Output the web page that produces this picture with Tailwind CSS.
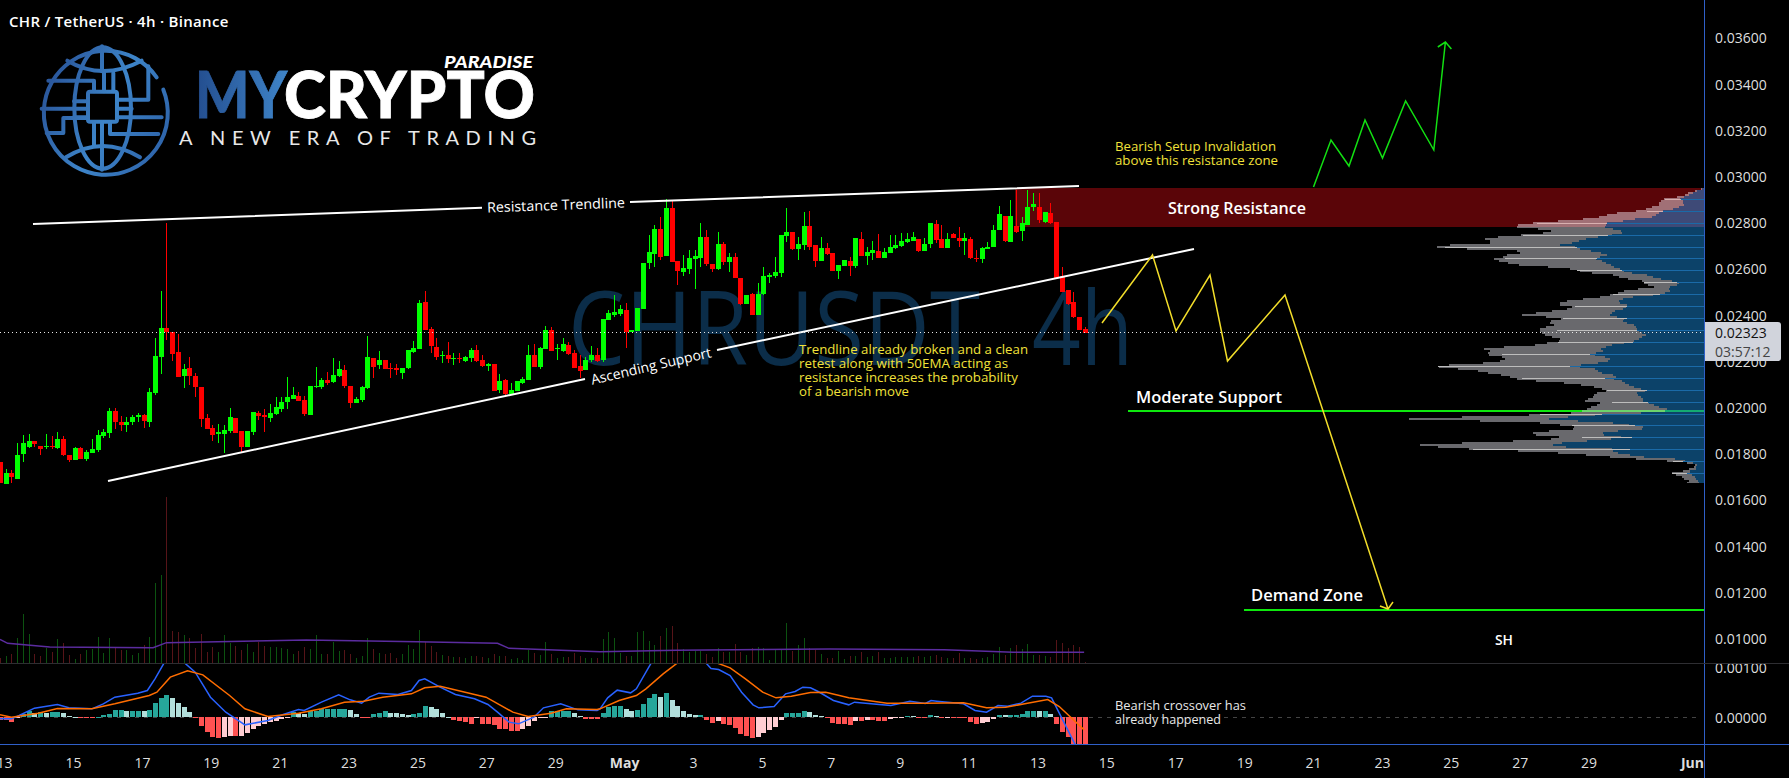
<!DOCTYPE html>
<html lang="en">
<head>
<meta charset="utf-8">
<title>CHR / TetherUS 4h</title>
<script src="https://cdn.jsdelivr.net/npm/@tailwindcss/browser@4"></script>
</head>
<body class="bg-black text-[#dedede] w-[1789px] h-[778px] overflow-hidden font-['Open_Sans',sans-serif]">
<div class="flex flex-col h-[778px]">
  <!-- price pane -->
  <div class="flex h-[663px] relative">
    <div class="w-[1704px] h-[663px] relative shrink-0">
      <svg id="main" width="1704" height="663" viewBox="0 0 1704 663" class="block">
        <defs>
          <linearGradient id="gl" gradientUnits="userSpaceOnUse" x1="20" x2="415" y1="120" y2="300"><stop offset="0" stop-color="#274f94"/><stop offset="0.55" stop-color="#3d84c8"/><stop offset="1" stop-color="#2e64aa"/></linearGradient>
          <linearGradient id="my" x1="0" x2="1" y1="0" y2="0"><stop offset="0" stop-color="#234d8e"/><stop offset="1" stop-color="#3f85c9"/></linearGradient>
        </defs>
        <text x="568" y="365" font-size="102" font-weight="500" fill="#0b2d49" textLength="412" lengthAdjust="spacingAndGlyphs">CHRUSDT</text>
        <text x="1032" y="365" font-size="102" font-weight="500" fill="#0b2d49" textLength="101" lengthAdjust="spacingAndGlyphs">4h</text>
        <rect x="1015" y="188" width="689" height="39" fill="#5a0508"/>
        <g id="profile"></g>
        <g id="vol"></g>
        <polyline id="ma" fill="none" stroke="#5b2c9f" stroke-width="1.5"></polyline>
        <g id="candles"></g>
        <!-- logo -->
        <g transform="translate(30 38) scale(0.3333)" fill="none" stroke="url(#gl)" stroke-width="12" stroke-linejoin="round" stroke-linecap="round">
          <path d="M380 118A186 186 0 1 0 400 155"/>
          <ellipse cx="218" cy="210" rx="85" ry="182"/>
          <path d="M216 25V100M216 322V395"/>
          <path d="M112 68Q218 130 335 68M108 358Q218 290 330 358"/>
          <rect x="174" y="161" width="87" height="90" rx="6"/>
          <path d="M222 105V160M250 105V160"/>
          <path d="M192 255V320M216 255V320"/>
          <path d="M55 128H192V160"/>
          <path d="M240 255V288H385"/>
          <path d="M262 185H355V85"/>
          <path d="M262 212H305M262 238H395"/>
          <path d="M35 212H172M132 190H172M132 238H172V238"/>
          <path d="M172 240H100V285H50"/>
        </g>
        <text x="195" y="118" font-size="64" font-weight="900" font-family="Lato" fill="url(#my)" stroke="url(#my)" stroke-width="0.8" textLength="92" lengthAdjust="spacingAndGlyphs">MY</text>
        <text x="284" y="118" font-size="64" font-weight="900" font-family="Lato" fill="#fff" stroke="#fff" stroke-width="0.8" textLength="251" lengthAdjust="spacingAndGlyphs">CRYPTO</text>
        <text x="444" y="68" font-size="17" font-weight="900" font-style="italic" font-family="Lato" fill="#fff" textLength="89" lengthAdjust="spacingAndGlyphs">PARADISE</text>
        <text x="179" y="145" font-size="20" font-weight="400" font-family="Lato" fill="#e8e8e8" textLength="357" lengthAdjust="spacing">A NEW ERA OF TRADING</text>
        <!-- trendlines -->
        <g stroke="#fff" stroke-width="2" fill="none">
          <path d="M33 224L482 207.7M630 202L1079 186"/>
          <path d="M108 481L585 379M717 350L1194 249"/>
        </g>
        <!-- levels -->
        <path d="M1128 411H1582" stroke="#0ee80e" stroke-width="2"/>
        <path d="M1582 411H1665" stroke="#6cd46c" stroke-width="2"/>
        <path d="M1665 411H1704" stroke="#14aa72" stroke-width="2"/>
        <path d="M1244 610H1704" stroke="#0ee80e" stroke-width="2"/>
        <!-- projections -->
        <g fill="none" stroke-linejoin="miter" stroke-width="1.5">
          <path stroke="#f2dd2a" d="M1102 323L1152.5 255L1176 331L1210 275L1227.5 361L1285 295L1388 609M1380 606L1388 609L1393 602"/>
          <path stroke="#12e012" d="M1313.5 187L1331 140L1349 166L1365 120L1382.5 158L1405.6 101L1433.8 150L1445.4 42M1437.8 47L1445.4 42L1451.4 49"/>
        </g>
        <path d="M0 332H1704" stroke="#e8e8e8" stroke-width="1" stroke-dasharray="1 3" shape-rendering="crispEdges"/>
        <!-- annotations -->
        <g fill="#f2e23a" font-size="13" font-weight="500">
          <text x="1115" y="151" textLength="161" lengthAdjust="spacingAndGlyphs">Bearish Setup Invalidation</text>
          <text x="1115" y="165" textLength="163" lengthAdjust="spacingAndGlyphs">above this resistance zone</text>
          <text x="799" y="354" textLength="229" lengthAdjust="spacingAndGlyphs">Trendline already broken and a clean</text>
          <text x="799" y="368" textLength="209" lengthAdjust="spacingAndGlyphs">retest along with 50EMA acting as</text>
          <text x="799" y="382" textLength="219" lengthAdjust="spacingAndGlyphs">resistance increases the probability</text>
          <text x="799" y="396" textLength="110" lengthAdjust="spacingAndGlyphs">of a bearish move</text>
        </g>
        <g fill="#fff" font-weight="500">
          <text x="556" y="210" font-size="14" text-anchor="middle" transform="rotate(-2 556 205)" textLength="138" lengthAdjust="spacingAndGlyphs">Resistance Trendline</text>
          <text x="651" y="371" font-size="14" text-anchor="middle" transform="rotate(-13 651 366)" textLength="123" lengthAdjust="spacingAndGlyphs">Ascending Support</text>
          <text x="1168" y="214" font-size="17" font-weight="600" textLength="138" lengthAdjust="spacingAndGlyphs">Strong Resistance</text>
          <text x="1136" y="403" font-size="17" font-weight="600" textLength="146" lengthAdjust="spacingAndGlyphs">Moderate Support</text>
          <text x="1251" y="601" font-size="17" font-weight="600" textLength="112" lengthAdjust="spacingAndGlyphs">Demand Zone</text>
          <text x="1495" y="645" font-size="14" font-weight="600" textLength="18" lengthAdjust="spacingAndGlyphs">SH</text>
        </g>
      </svg>
      <div class="absolute left-[9px] top-[11px] text-[15px] leading-[20px] font-semibold tracking-[0.3px] text-white">CHR / TetherUS · 4h · Binance</div>
    </div>
    <div class="w-[85px] h-[663px] border-l border-[#2f5fc8] pl-[10px] pt-[14.9px] text-[14px] relative">
      <div class="h-[46.2px] flex items-center">0.03600</div>
      <div class="h-[46.2px] flex items-center">0.03400</div>
      <div class="h-[46.2px] flex items-center">0.03200</div>
      <div class="h-[46.2px] flex items-center">0.03000</div>
      <div class="h-[46.2px] flex items-center">0.02800</div>
      <div class="h-[46.2px] flex items-center">0.02600</div>
      <div class="h-[46.2px] flex items-center">0.02400</div>
      <div class="h-[46.2px] flex items-center">0.02200</div>
      <div class="h-[46.2px] flex items-center">0.02000</div>
      <div class="h-[46.2px] flex items-center">0.01800</div>
      <div class="h-[46.2px] flex items-center">0.01600</div>
      <div class="h-[46.2px] flex items-center">0.01400</div>
      <div class="h-[46.2px] flex items-center">0.01200</div>
      <div class="h-[46.2px] flex items-center">0.01000</div>
      <div class="absolute left-0 top-[322px] w-[76px] h-[39px] bg-[#d1d4dc] rounded-r-[3px] pl-[10px] flex flex-col justify-center text-[14px] leading-[19px]">
        <div class="text-[#111]">0.02323</div>
        <div class="text-[#444]">03:57:12</div>
      </div>
    </div>
  </div>
  <!-- macd pane -->
  <div class="flex h-[80px] border-t border-[#2e2e32] box-content">
    <div class="w-[1704px] h-[80px] shrink-0">
      <svg id="macd" width="1704" height="80" viewBox="0 663.5 1704 80" class="block">
        <path d="M0 717H1700" stroke="#444" stroke-dasharray="4 5"/>
        <g id="hist"></g>
        <polyline id="mb" fill="none" stroke="#2962ff" stroke-width="1.5"></polyline>
        <polyline id="mo" fill="none" stroke="#ff6d00" stroke-width="1.5"></polyline>
        <g fill="#e8e8e8" font-size="13" font-weight="500">
          <text x="1115" y="709" textLength="131" lengthAdjust="spacingAndGlyphs">Bearish crossover has</text>
          <text x="1115" y="723" textLength="106" lengthAdjust="spacingAndGlyphs">already happened</text>
        </g>
      </svg>
    </div>
    <div class="flex-1 h-[80px] overflow-hidden border-l border-[#2f5fc8] pl-[10px] text-[14px]">
      <div class="h-[50px] flex items-center -mt-[22px]">0.00100</div>
      <div class="h-[50px] flex items-center">0.00000</div>
    </div>
  </div>
  <!-- time axis -->
  <div class="flex h-[34px] border-t border-[#2f5fc8]">
    <div class="w-[1704px] h-[34px] shrink-0 overflow-hidden flex items-center text-[14px] text-center">
      <div class="w-[68.9px] -ml-[29.85px] shrink-0">13</div>
      <div class="w-[68.9px] shrink-0">15</div>
      <div class="w-[68.9px] shrink-0">17</div>
      <div class="w-[68.9px] shrink-0">19</div>
      <div class="w-[68.9px] shrink-0">21</div>
      <div class="w-[68.9px] shrink-0">23</div>
      <div class="w-[68.9px] shrink-0">25</div>
      <div class="w-[68.9px] shrink-0">27</div>
      <div class="w-[68.9px] shrink-0">29</div>
      <div class="w-[68.9px] shrink-0 font-bold">May</div>
      <div class="w-[68.9px] shrink-0">3</div>
      <div class="w-[68.9px] shrink-0">5</div>
      <div class="w-[68.9px] shrink-0">7</div>
      <div class="w-[68.9px] shrink-0">9</div>
      <div class="w-[68.9px] shrink-0">11</div>
      <div class="w-[68.9px] shrink-0">13</div>
      <div class="w-[68.9px] shrink-0">15</div>
      <div class="w-[68.9px] shrink-0">17</div>
      <div class="w-[68.9px] shrink-0">19</div>
      <div class="w-[68.9px] shrink-0">21</div>
      <div class="w-[68.9px] shrink-0">23</div>
      <div class="w-[68.9px] shrink-0">25</div>
      <div class="w-[68.9px] shrink-0">27</div>
      <div class="w-[68.9px] shrink-0">29</div>
      <div class="w-[68.9px] ml-[34.5px] shrink-0 font-bold">Jun</div>
    </div>
    <div class="flex-1 border-l border-[#2f5fc8]"></div>
  </div>
</div>
<script>
const NS='http://www.w3.org/2000/svg';
function el(t,a,p){const e=document.createElementNS(NS,t);for(const k in a)e.setAttribute(k,a[k]);p.appendChild(e);return e}
const A=[[905,970,905,970,0],[940,972,928,972,1],[938,952,930,970,0],[885,957,850,957,1],[850,882,825,905,1],[843,861,823,865,1],[843,852,843,862,0],[858,867,858,885,0],[858,861,822,866,1],[857,860,828,868,0],[838,864,817,868,1],[838,885,828,888,0],[885,900,885,905,0],[865,900,862,900,1],[865,898,860,898,0],[877,897,870,903,1],[867,880,838,880,1],[825,870,810,875,1],[816,829,808,833,1],[753,819,744,833,1],[753,786,744,808,0],[786,795,768,812,0],[786,795,772,816,1],[771,786,765,794,1],[766,772,760,785,1],[766,783,762,803,0],[696,785,685,800,1],[588,698,534,705,1],[505,590,393,642,1],[505,515,190,540,0],[516,581,516,603,0],[577,651,522,651,0],[627,648,612,683,1],[624,647,591,675,0],[648,680,640,710,0],[681,776,681,802,0],[775,806,762,806,0],[804,824,795,842,0],[817,821,792,848,1],[810,821,795,878,1],[770,813,744,818,1],[773,818,773,820,0],[813,861,813,880,0],[813,861,813,861,1],[756,815,756,825,1],[760,768,752,780,0],[766,772,748,815,0],[760,773,732,785,1],[741,761,710,765,1],[726,748,712,755,1],[711,727,652,748,1],[705,716,682,716,1],[708,722,695,722,0],[720,762,707,767,0],[678,765,678,765,1],[679,682,622,683,1],[659,682,655,688,1],[660,668,637,675,0],[645,665,595,668,1],[627,647,603,650,1],[630,678,615,684,0],[678,728,678,743,0],[717,728,712,728,1],[680,720,678,725,1],[591,684,528,686,1],[594,620,594,654,0],[600,614,574,628,1],[600,627,600,628,0],[623,626,610,653,0],[623,630,612,645,0],[623,638,623,657,1],[571,624,571,627,1],[565,576,543,578,1],[429,566,420,566,1],[426,509,393,509,0],[507,557,502,580,0],[561,590,534,600,0],[585,588,574,610,1],[585,596,547,610,0],[594,597,578,614,1],[594,597,580,608,0],[591,604,588,606,1],[570,594,565,606,1],[571,602,556,605,0],[600,617,585,620,0],[612,617,608,633,1],[612,693,612,693,0],[663,690,642,698,1],[660,702,658,704,0],[690,703,668,703,1],[663,693,663,693,1],[656,669,652,672,1],[585,660,555,660,1],[585,622,553,622,0],[564,622,560,627,1],[510,568,498,568,1],[510,573,500,573,0],[564,567,553,600,1],[551,572,533,575,1],[555,581,545,585,0],[580,624,570,624,0],[618,632,585,655,0],[600,630,592,630,1],[586,600,558,607,1],[586,604,563,607,0]];
const B=[[448,571,448,575,1],[430,450,420,450,1],[427,435,375,440,1],[418,432,405,437,1],[420,487,400,533,0],[480,487,480,487,1],[413,484,413,484,1],[280,418,280,418,1],[246,279,195,297,1],[177,251,165,290,1],[177,262,140,270,0],[113,258,88,258,1],[113,276,90,276,0],[273,303,273,345,0],[295,306,255,318,1],[264,297,240,312,1],[258,267,240,357,1],[201,264,160,290,1],[201,283,180,288,0],[282,296,282,305,0],[222,297,185,300,1],[222,275,215,285,0],[261,275,248,305,1],[261,323,250,325,0],[323,402,323,405,0],[375,402,375,402,1],[372,436,370,436,0],[372,436,340,436,1],[318,373,290,375,1],[314,320,308,340,1],[307,318,262,325,1],[195,309,195,322,1],[186,199,113,215,1],[186,238,186,240,0],[222,236,200,270,1],[168,225,125,240,1],[168,232,122,240,0],[225,273,225,290,0],[235,273,202,273,1],[235,251,220,255,0],[250,303,250,303,0],[285,303,285,328,1],[270,288,270,288,1],[274,288,260,317,0],[204,288,204,295,1],[208,257,186,258,0],[246,258,232,285,1],[240,250,212,270,1],[243,263,193,265,0],[246,263,235,265,1],[232,249,195,250,1],[226,234,195,236,1],[213,228,190,230,1],[207,217,190,218,1],[201,213,186,213,1],[207,243,207,245,0],[222,244,205,244,1],[159,222,159,234,1],[162,210,150,220,0],[207,234,165,234,0],[208,234,190,234,1],[192,204,190,205,0],[204,214,172,230,0],[204,212,190,255,1],[207,264,202,268,0],[264,268,240,275,0],[234,267,232,278,1],[231,236,215,236,1],[180,231,165,231,1],[132,180,108,180,1],[138,213,138,215,0],[138,215,90,215,1],[168,187,60,190,0],[159,183,140,213,1],[111,165,60,165,1],[102,111,70,122,1],[111,150,70,158,0],[126,156,125,160,1],[129,160,100,162,0],[156,323,156,323,0],[318,366,290,366,0],[360,402,360,405,0],[396,442,366,445,0],[441,480,441,480,0],[476,488,470,488,0]];
const cs=[...A.map(c=>c.slice(0,4).map(v=>160+v/3).concat(c[4])),...B.map(c=>c.slice(0,4).map(v=>170+v/3).concat(c[4]))];
const gC=document.getElementById('candles');
cs.forEach((c,i)=>{const x=Math.round(5.74*i),col=c[4]?'#00ff00':'#ff0000';
  el('rect',{x:x,y:c[2],width:1,height:Math.max(1,c[3]-c[2]),fill:col,'shape-rendering':'crispEdges'},gC);
  el('rect',{x:x-2,y:c[0],width:5,height:Math.max(1,c[1]-c[0]),fill:col,'shape-rendering':'crispEdges'},gC);});
// volume
const V=[235,228,222,175,102,162,222,228,204,215,178,190,225,238,222,210,207,172,220,175,203,210,210,225,220,195,170,10,-15,-250,153,155,165,175,205,162,215,200,215,165,190,198,210,192,215,187,198,200,202,205,207,222,212,202,207,165,222,222,185,212,210,222,235,228,175,207,220,222,220,235,222,195,208,150,185,198,215,225,228,230,232,235,228,228,232,235,222,228,228,238,235,240,210,220,225,185,222,235,232,232,220,228,235,235,235,178,155,175,220,228,228,155,153,183,195,168,143,138,190,207,217,212,212,222,232,205,215,215,192,215,225,205,202,205,240,208,208,128,212,195,175,205,210,222,235,235,212,238,228,228,215,232,228,215,235,235,232,232,232,232,228,232,228,225,232,235,235,218,235,235,238,235,232,222,200,225,205,195,208,192,225,225,228,232,180,190,205,195,200,245];
const gV=document.getElementById('vol');
V.forEach((v,i)=>{const y=580+v/3;el('rect',{x:Math.round(5.74*i),y:y,width:1,height:663-y,fill:cs[i][4]?'#0c5210':'#561418','shape-rendering':'crispEdges'},gV);});
document.getElementById('ma').setAttribute('points',[[0,178],[20,190],[130,201],[400,203],[435,188],[800,180],[1090,185],[1300,190],[1330,205],[1568,215]].map(p=>(p[0]/2.613)+','+(580+p[1]/3)).concat([[200,211],[600,207],[900,209],[1080,217],[1265,217]].map(p=>(600+p[0]/2.613)+','+(580+p[1]/3))).join(' '));
// macd histogram
const H=[418,418,423,410,400,392,397,395,396,395,393,398,407,408,410,413,413,408,404,400,388,388,390,390,390,392,388,368,351,342,351,368,380,393,411,436,453,468,471,470,466,466,465,458,445,435,430,425,420,414,410,395,397,400,392,390,386,386,385,385,384,389,401,410,410,400,396,392,396,398,401,404,400,396,375,378,386,398,408,418,422,425,429,412,430,431,432,444,444,450,450,444,436,420,413,410,390,390,390,390,396,406,414,414,414,396,380,377,375,385,390,388,369,353,339,348,336,357,375,390,400,404,402,417,426,422,430,432,442,460,465,473,468,456,448,438,417,398,396,396,390,393,404,406,413,426,430,430,432,420,420,418,418,420,420,416,413,410,405,406,410,412,402,405,412,411,411,412,412,424,429,426,423,416,402,404,403,402,400,392,390,392,392,400,429,453,468,490,490,490];
const gH=document.getElementById('hist');
H.forEach((h,i)=>{const p=h<409,prev=i?H[i-1]:h;let col;
  if(p)col=h<=prev?'#26a69a':'#b2dfdb';else col=h>=prev?'#ff5252':'#ffcdd2';
  const y=580+Math.min(h,409)/3,y2=580+Math.max(h,409)/3;
  el('rect',{x:Math.round(5.74*i)-2,y:y,width:5,height:Math.max(1,y2-y),fill:col,'shape-rendering':'crispEdges'},gH);});
const lz=(a,b)=>a.map(p=>(p[0]/2.613)+','+(580+p[1]/3)).concat(b.map(p=>(600+p[0]/2.613)+','+(580+p[1]/3))).join(' ');
document.getElementById('mb').setAttribute('points',lz([[0,415],[30,415],[50,405],[90,383],[150,372],[180,382],[240,385],[270,370],[300,350],[360,338],[385,330],[405,295],[430,245],[480,245],[510,275],[550,350],[590,395],[640,433],[700,420],[740,402],[780,387],[795,390],[840,365],[885,343],[915,358],[945,368],[965,350],[990,338],[1040,342],[1075,330],[1095,300],[1110,295],[1150,320],[1190,342],[1240,355],[1275,372],[1300,395],[1330,425],[1355,430],[1395,410],[1420,382],[1465,370],[1510,388],[1560,390]],[[0,385],[20,352],[45,329],[80,337],[95,325],[135,245],[275,245],[290,264],[310,267],[340,285],[370,335],[400,373],[415,382],[455,378],[485,340],[510,333],[530,320],[550,322],[570,333],[610,360],[650,373],[665,365],[730,372],[760,375],[810,362],[850,369],[865,360],[880,362],[950,370],[980,390],[1010,395],[1040,375],[1065,377],[1100,368],[1130,347],[1165,347],[1180,352],[1245,500]]));
document.getElementById('mo').setAttribute('points',lz([[0,403],[30,410],[100,398],[150,384],[240,385],[300,370],[390,345],[410,335],[445,290],[490,271],[530,283],[600,345],[640,385],[700,408],[780,398],[840,385],[900,365],[950,362],[1000,350],[1075,340],[1110,322],[1150,317],[1270,350],[1340,395],[1380,408],[1440,398],[1480,385],[1560,387]],[[0,385],[50,360],[95,345],[120,325],[165,280],[205,245],[300,245],[340,262],[380,295],[425,335],[460,352],[500,347],[550,336],[590,335],[650,352],[750,368],[850,368],[950,367],[1010,382],[1060,380],[1110,370],[1170,357],[1200,378],[1265,448]]));
// volume profile: [y, gray left edge, blue left edge]
const p1=[[10,850,850],[15,835,838],[25,800,815],[35,780,795],[42,735,782],[50,720,790],[60,715,790],[68,690,775],[78,650,730],[85,580,712],[95,540,705],[100,510,650],[107,430,620],[112,350,565],[118,320,560],[122,270,555],[130,320,560],[135,400,600],[145,365,605],[152,280,565],[158,215,520],[165,180,480],[172,250,470],[180,90,420],[187,42,470],[192,140,480],[200,340,520],[208,260,565],[215,250,540],[222,225,530],[230,240,550],[240,295,570],[248,420,590],[255,470,605],[262,495,620],[270,580,680],[280,610,710],[290,680,770],[297,670,785],[305,710,750],[318,610,750],[328,580,720],[335,545,640],[342,490,610],[352,415,590],[360,420,620],[368,470,620],[380,380,580],[390,305,570],[400,430,610],[410,380,605],[420,400,640],[430,360,650],[440,355,655],[450,375,680]];
const p2=[[0,430,650],[8,390,620],[15,345,575],[25,190,545],[35,215,550],[42,190,510],[50,240,550],[60,265,580],[70,180,530],[78,30,450],[85,90,520],[92,165,530],[100,205,545],[108,270,600],[115,270,570],[122,330,600],[130,450,620],[140,520,640],[152,560,680],[160,530,650],[170,520,660],[182,490,670],[190,545,690],[200,520,715],[210,490,750],[218,480,700],[222,360,550],[228,300,500],[235,-110,365],[240,80,420],[248,350,570],[256,435,640],[265,480,690],[272,390,600],[280,335,545],[285,345,550],[292,430,610],[300,370,550],[305,220,470],[312,60,400],[318,-66,395],[322,90,450],[328,160,600],[335,345,570],[342,460,610],[350,560,660],[358,660,780],[364,760,800],[372,825,832],[380,820,825],[388,805,830],[395,780,800],[400,745,810],[408,780,820],[415,790,830],[422,805,830],[428,805,840]];
const pr=[...p1.map(p=>[185+p[0]/3,1420+p[1]/3,1420+p[2]/3]),...p2.map(p=>[340+p[0]/3,1420+p[1]/3,1420+p[2]/3])];
const at=(y,k)=>{for(let i=1;i<pr.length;i++)if(y<=pr[i][0]){const a=pr[i-1],b=pr[i],f=(y-a[0])/((b[0]-a[0])||1);return a[k]+(b[k]-a[k])*f}return pr[pr.length-1][k]};
const gP=document.getElementById('profile');
for(let y=188;y<483;y++){const yy=y-(y%2);const j=Math.sin(yy*12.9898)*43758.5453,r=j-Math.floor(j),cy=yy+1;
  const g=at(cy,1)+(r-.5)*2.5,b=Math.max(at(cy,2)+(r-.5)*2,g),top=y<227;
  el('rect',{x:g,y:y,width:Math.max(0,b-g),height:1,fill:top?'#a17076':'#69696d','shape-rendering':'crispEdges'},gP);
  el('rect',{x:b,y:y,width:Math.max(0,1704-b),height:1,fill:top?'#3e4a77':'#0c4269','shape-rendering':'crispEdges'},gP);}
const L=[[199,735,782],[211,680,730],[223,350,560],[235,310,565],[247,75,470],[258,255,530],[270,470,605],[282,672,770],[294,580,720],[306,465,620],[318,430,620],[330,410,650],[342,415,640],[354,245,510],[366,55,450],[378,305,555],[390,560,680],[402,575,685],[414,360,545],[425,455,645],[437,485,635],[449,160,630],[461,760,790],[473,755,800]];
L.forEach(l=>{const x1=1420+l[1]/3,x2=1420+l[2]/3;
  el('rect',{x:x1,y:l[0],width:x2-x1,height:1,fill:l[0]<227?'#d8b0b0':'#bdbdbd','shape-rendering':'crispEdges'},gP);
  el('rect',{x:x2,y:l[0],width:1704-x2,height:1,fill:'#1a6aa8','shape-rendering':'crispEdges'},gP);});
</script>
</body>
</html>
